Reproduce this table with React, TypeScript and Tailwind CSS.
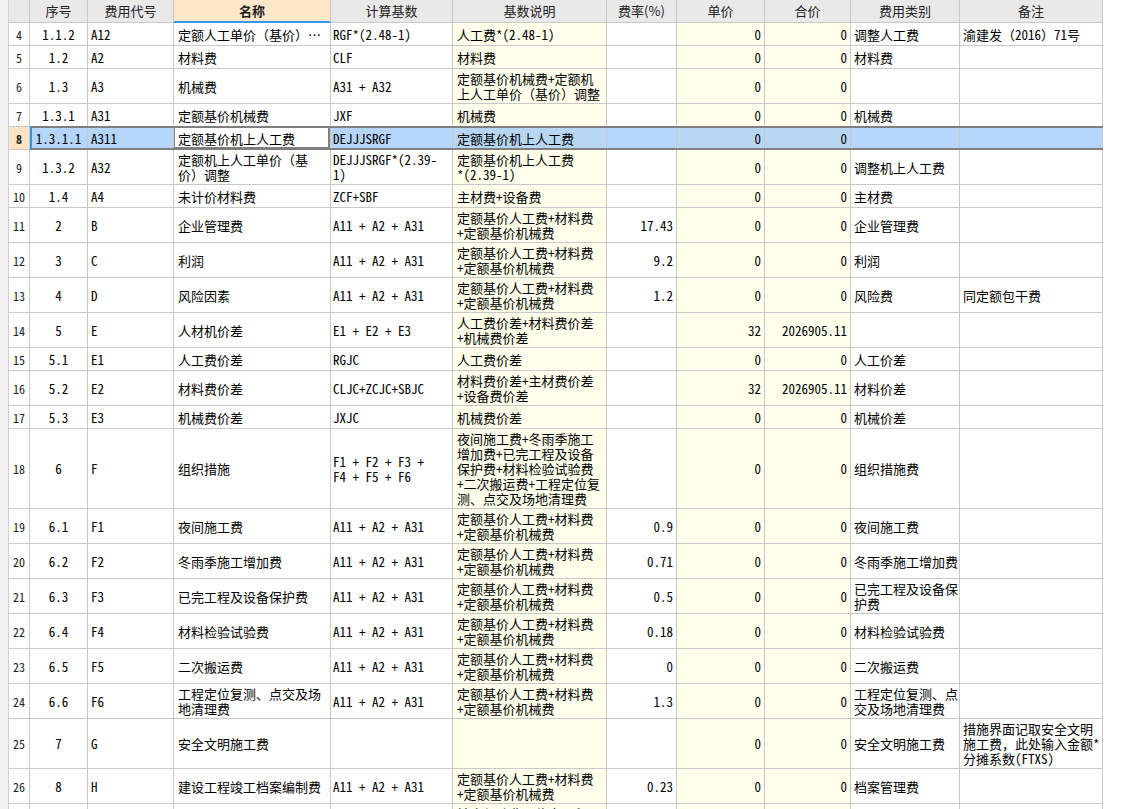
import React from "react";

type Row = {
  n: number;
  seq: string;
  code: string;
  name: string;
  base: string;
  desc: string;
  rate: string;
  price: string;
  total: string;
  cat: string;
  note: string;
  sel?: boolean;
  hideNum?: boolean;
};

const D = "定额基价人工费+材料费|+定额基价机械费";
const B = "A11 + A2 + A31";

const rows: Row[] = [
  { n: 4, seq: "1.1.2", code: "A12", name: "定额人工单价（基价）…", base: "RGF*(2.48-1)", desc: "人工费*(2.48-1)", rate: "", price: "0", total: "0", cat: "调整人工费", note: "渝建发（2016）71号" },
  { n: 5, seq: "1.2", code: "A2", name: "材料费", base: "CLF", desc: "材料费", rate: "", price: "0", total: "0", cat: "材料费", note: "" },
  { n: 6, seq: "1.3", code: "A3", name: "机械费", base: "A31 + A32", desc: "定额基价机械费+定额机|上人工单价（基价）调整", rate: "", price: "0", total: "0", cat: "", note: "" },
  { n: 7, seq: "1.3.1", code: "A31", name: "定额基价机械费", base: "JXF", desc: "机械费", rate: "", price: "0", total: "0", cat: "机械费", note: "" },
  { n: 8, seq: "1.3.1.1", code: "A311", name: "定额基价机上人工费", base: "DEJJJSRGF", desc: "定额基价机上人工费", rate: "", price: "0", total: "0", cat: "", note: "", sel: true },
  { n: 9, seq: "1.3.2", code: "A32", name: "定额机上人工单价（基|价）调整", base: "DEJJJSRGF*(2.39-|1)", desc: "定额基价机上人工费|*(2.39-1)", rate: "", price: "0", total: "0", cat: "调整机上人工费", note: "" },
  { n: 10, seq: "1.4", code: "A4", name: "未计价材料费", base: "ZCF+SBF", desc: "主材费+设备费", rate: "", price: "0", total: "0", cat: "主材费", note: "" },
  { n: 11, seq: "2", code: "B", name: "企业管理费", base: B, desc: D, rate: "17.43", price: "0", total: "0", cat: "企业管理费", note: "" },
  { n: 12, seq: "3", code: "C", name: "利润", base: B, desc: D, rate: "9.2", price: "0", total: "0", cat: "利润", note: "" },
  { n: 13, seq: "4", code: "D", name: "风险因素", base: B, desc: D, rate: "1.2", price: "0", total: "0", cat: "风险费", note: "同定额包干费" },
  { n: 14, seq: "5", code: "E", name: "人材机价差", base: "E1 + E2 + E3", desc: "人工费价差+材料费价差|+机械费价差", rate: "", price: "32", total: "2026905.11", cat: "", note: "" },
  { n: 15, seq: "5.1", code: "E1", name: "人工费价差", base: "RGJC", desc: "人工费价差", rate: "", price: "0", total: "0", cat: "人工价差", note: "" },
  { n: 16, seq: "5.2", code: "E2", name: "材料费价差", base: "CLJC+ZCJC+SBJC", desc: "材料费价差+主材费价差|+设备费价差", rate: "", price: "32", total: "2026905.11", cat: "材料价差", note: "" },
  { n: 17, seq: "5.3", code: "E3", name: "机械费价差", base: "JXJC", desc: "机械费价差", rate: "", price: "0", total: "0", cat: "机械价差", note: "" },
  { n: 18, seq: "6", code: "F", name: "组织措施", base: "F1 + F2 + F3 +|F4 + F5 + F6", desc: "夜间施工费+冬雨季施工|增加费+已完工程及设备|保护费+材料检验试验费|+二次搬运费+工程定位复|测、点交及场地清理费", rate: "", price: "0", total: "0", cat: "组织措施费", note: "" },
  { n: 19, seq: "6.1", code: "F1", name: "夜间施工费", base: B, desc: D, rate: "0.9", price: "0", total: "0", cat: "夜间施工费", note: "" },
  { n: 20, seq: "6.2", code: "F2", name: "冬雨季施工增加费", base: B, desc: D, rate: "0.71", price: "0", total: "0", cat: "冬雨季施工增加费", note: "" },
  { n: 21, seq: "6.3", code: "F3", name: "已完工程及设备保护费", base: B, desc: D, rate: "0.5", price: "0", total: "0", cat: "已完工程及设备保|护费", note: "" },
  { n: 22, seq: "6.4", code: "F4", name: "材料检验试验费", base: B, desc: D, rate: "0.18", price: "0", total: "0", cat: "材料检验试验费", note: "" },
  { n: 23, seq: "6.5", code: "F5", name: "二次搬运费", base: B, desc: D, rate: "0", price: "0", total: "0", cat: "二次搬运费", note: "" },
  { n: 24, seq: "6.6", code: "F6", name: "工程定位复测、点交及场|地清理费", base: B, desc: D, rate: "1.3", price: "0", total: "0", cat: "工程定位复测、点|交及场地清理费", note: "" },
  { n: 25, seq: "7", code: "G", name: "安全文明施工费", base: "", desc: "", rate: "", price: "0", total: "0", cat: "安全文明施工费", note: "措施界面记取安全文明|施工费，此处输入金额*|分摊系数(FTXS)" },
  { n: 26, seq: "8", code: "H", name: "建设工程竣工档案编制费", base: B, desc: D, rate: "0.23", price: "0", total: "0", cat: "档案管理费", note: "" },
  { n: 27, seq: "", code: "", name: "", base: "", desc: "社会保险费及住房公积|金+工程排污费|+其他", rate: "", price: "", total: "", cat: "", note: "", hideNum: true },
];

const split = (s: string) => (s ? s.split("|") : []);

function Lines({ text }: { text: string }) {
  return (
    <div>
      {split(text).map((l, i) => (
        <div key={i} className="h-[15px] whitespace-nowrap leading-[15px]">
          {l}
        </div>
      ))}
    </div>
  );
}

const cellBase = "flex shrink-0 items-center border-r border-b border-[#c8c8c8] overflow-hidden leading-[15px]";

function DataRow({ r }: { r: Row }) {
  const lines = Math.max(
    ...[r.name, r.base, r.desc, r.cat, r.note].map((s) => split(s).length),
    1
  );
  const h = lines <= 1 ? 23 : lines * 15 + 5;
  const white = r.sel ? "bg-[#b5d5fa]" : "bg-white";
  const yellow = r.sel ? "bg-[#b6d6f2]" : "bg-[#ffffec]";
  return (
    <div className="relative flex shrink-0" style={{ height: h }}>
      <div
        className={`${cellBase} w-[21px] justify-center text-[12px] text-[#222] ${
          r.sel ? "bg-[#fde4c4] font-bold" : "bg-white"
        }`}
      >
        {r.hideNum ? "" : r.n}
      </div>
      <div className={`${cellBase} w-[58px] justify-center ${white}`}>{r.seq}</div>
      <div className={`${cellBase} w-[86px] pl-[3px] ${white}`}>{r.code}</div>
      <div className={`${cellBase} relative w-[157px] pl-[4px] bg-white`}>
        <Lines text={r.name} />
        {r.sel && (
          <div className="absolute left-[-1px] top-[-1px] right-0 bottom-0 border-2 border-[#7f7f7f]" />
        )}
      </div>
      <div className={`${cellBase} w-[122px] pl-[2px] ${white}`}>
        <Lines text={r.base} />
      </div>
      <div className={`${cellBase} w-[154px] pl-[4px] ${yellow}`}>
        <Lines text={r.desc} />
      </div>
      <div className={`${cellBase} w-[70px] justify-end pr-[3px] ${white}`}>{r.rate}</div>
      <div className={`${cellBase} w-[88px] justify-end pr-[3px] ${yellow}`}>{r.price}</div>
      <div className={`${cellBase} w-[86px] justify-end pr-[3px] ${yellow}`}>{r.total}</div>
      <div className={`${cellBase} w-[109px] pl-[3px] ${white}`}>
        <Lines text={r.cat} />
      </div>
      <div className={`${cellBase} w-[143px] pl-[3px] ${white}`}>
        <Lines text={r.note} />
      </div>
      {r.sel && (
        <>
          <div className="absolute left-[21px] top-[-1px] bottom-0 w-[2px] bg-[#3b8fe8]" />
          <div className="absolute left-[23px] right-0 top-[-1px] h-[2px] bg-[#7f7f7f]" />
          <div className="absolute left-[23px] right-0 bottom-0 h-[2px] bg-[#7f7f7f]" />
        </>
      )}
    </div>
  );
}

const hdr =
  "flex shrink-0 items-center justify-center border-r border-b border-[#c8c8c8] bg-[#e9e9e9] h-[23px] font-['Noto_Sans_CJK_SC',sans-serif] text-[13px] text-[#222]";

export default function App() {
  return (
    <div className="flex h-[809px] w-[1127px] items-start overflow-hidden bg-white text-[13px] text-black font-['Noto_Sans_Mono_CJK_SC','Noto_Sans_CJK_SC',monospace]">
      <div className="h-[809px] w-[9px] shrink-0 border-r border-[#d0d0d0] bg-[#f0f0f0]" />
      <div className="flex shrink-0 flex-col">
        <div className="flex shrink-0">
          <div className={`${hdr} w-[21px]`} />
          <div className={`${hdr} w-[58px]`}>序号</div>
          <div className={`${hdr} w-[86px]`}>费用代号</div>
          <div className="flex h-[23px] w-[157px] shrink-0 items-center justify-center border-r border-b-2 border-r-[#c8c8c8] border-b-[#3c96ef] bg-[#fee7c9] font-['Noto_Sans_CJK_SC',sans-serif] text-[13px] font-bold text-[#222]">
            名称
          </div>
          <div className={`${hdr} w-[122px]`}>计算基数</div>
          <div className={`${hdr} w-[154px]`}>基数说明</div>
          <div className={`${hdr} w-[70px]`}>费率(%)</div>
          <div className={`${hdr} w-[88px]`}>单价</div>
          <div className={`${hdr} w-[86px]`}>合价</div>
          <div className={`${hdr} w-[109px]`}>费用类别</div>
          <div className={`${hdr} w-[143px]`}>备注</div>
        </div>
        {rows.map((r) => (
          <DataRow key={r.n} r={r} />
        ))}
      </div>
    </div>
  );
}
